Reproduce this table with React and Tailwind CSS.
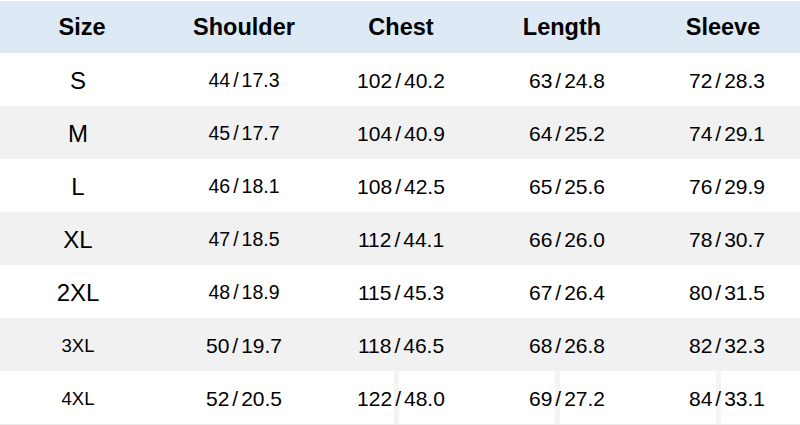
import React from 'react';

const rows = [
  { size: 'S', big: true, cells: [['44', '17.3'], ['102', '40.2'], ['63', '24.8'], ['72', '28.3']] },
  { size: 'M', big: true, cells: [['45', '17.7'], ['104', '40.9'], ['64', '25.2'], ['74', '29.1']] },
  { size: 'L', big: true, cells: [['46', '18.1'], ['108', '42.5'], ['65', '25.6'], ['76', '29.9']] },
  { size: 'XL', big: true, cells: [['47', '18.5'], ['112', '44.1'], ['66', '26.0'], ['78', '30.7']] },
  { size: '2XL', big: true, cells: [['48', '18.9'], ['115', '45.3'], ['67', '26.4'], ['80', '31.5']] },
  { size: '3XL', big: false, cells: [['50', '19.7'], ['118', '46.5'], ['68', '26.8'], ['82', '32.3']] },
  { size: '4XL', big: false, cells: [['52', '20.5'], ['122', '48.0'], ['69', '27.2'], ['84', '33.1']] },
];

const cols = 'grid grid-cols-[160px_168px_146px_180px_146px]';

function Value({ a, b, small }) {
  return (
    <span className={small ? 'text-[19.5px]' : 'text-[21px]'}>
      {a}
      <span className="mx-[3px]">/</span>
      {b}
    </span>
  );
}

export default function App() {
  return (
    <div
      className="w-[800px] h-[425px] bg-white text-black overflow-hidden"
      style={{ fontFamily: '"Liberation Sans", Arial, sans-serif' }}
    >
      <div className="pt-px">
        <div className={`${cols} h-[52px] items-center pt-[2px] bg-[#dde9f5] text-[23.5px] font-bold`}>
          <div className="text-center pl-1">Size</div>
          <div className="text-center">Shoulder</div>
          <div className="text-center">Chest</div>
          <div className="text-center pr-[4px]">Length</div>
          <div className="text-center pr-2">Sleeve</div>
        </div>
      </div>

      {rows.map((r, i) => (
        <div
          key={r.size}
          className={`${cols} relative h-[53px] items-center ${i % 2 === 1 ? 'bg-[#f1f1f1]' : 'bg-white'}`}
        >
          {r.size === '4XL' && (
            <>
              <div className="absolute top-0 bottom-0 left-[394px] w-[5px] bg-[#f4f4f4]" />
              <div className="absolute top-0 bottom-0 left-[555px] w-[5px] bg-[#f4f4f4]" />
              <div className="absolute top-0 bottom-0 left-[716px] w-[5px] bg-[#f4f4f4]" />
            </>
          )}
          <div className={`relative text-center pr-1 pt-[2px] ${r.big ? 'text-[24px]' : 'text-[18.5px]'}`}>
            {r.size}
          </div>
          {r.cells.map(([a, b], j) => (
            <div key={j} className={`relative text-center pt-[3px] ${j === 2 ? 'pl-[6px]' : ''}`}>
              <Value a={a} b={b} small={j === 0 && r.big} />
            </div>
          ))}
        </div>
      ))}
      <div className="h-px bg-[#ebebeb]" />
    </div>
  );
}
